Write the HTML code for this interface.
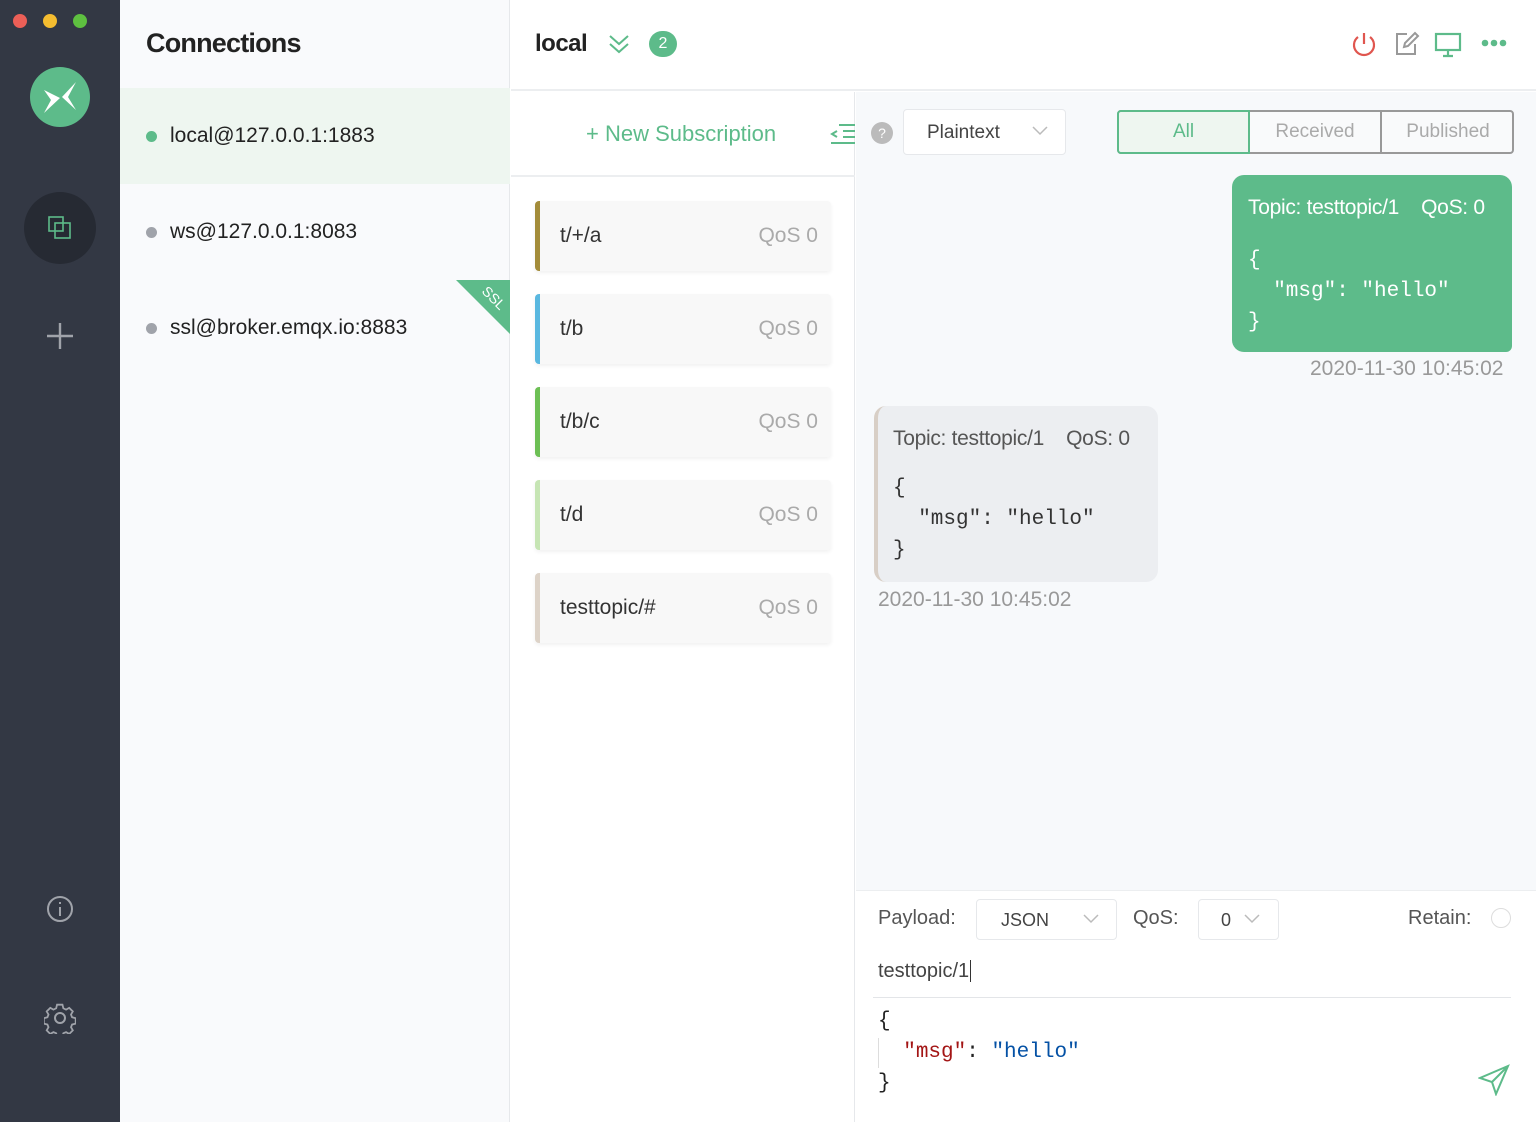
<!DOCTYPE html>
<html><head><meta charset="utf-8"><style>
*{margin:0;padding:0;box-sizing:border-box}
body{width:1536px;height:1122px;overflow:hidden;font-family:"Liberation Sans",sans-serif;background:#fff;position:relative;color:#222}
.abs{position:absolute}
.side{left:0;top:0;width:120px;height:1122px;background:#333844}
.conn{left:120px;top:0;width:390px;height:1122px;background:#f9fafc;border-right:1px solid #e6e8eb}
.dot{width:11px;height:11px;border-radius:50%}
.ci{font-size:21px;color:#222}
.mono{font-family:"Liberation Mono",monospace}
.card{left:535px;width:296px;height:70px;background:#f8f8f8;border-radius:4px;box-shadow:0 2px 4px rgba(0,0,0,.06);border-left:5px solid}
.card .t{position:absolute;left:20px;top:23px;font-size:21px;color:#333}
.card .q{position:absolute;right:13px;top:23px;font-size:21px;color:#aaa}
</style></head><body>
<div class="abs side">
 <div class="abs dot" style="left:13px;top:14px;width:14px;height:14px;background:#ec5f57"></div>
 <div class="abs dot" style="left:43px;top:14px;width:14px;height:14px;background:#f5bd30"></div>
 <div class="abs dot" style="left:73px;top:14px;width:14px;height:14px;background:#5ec040"></div>
 <div class="abs" style="left:30px;top:67px;width:60px;height:60px;border-radius:50%;background:#5dbb8a"></div>
 <svg class="abs" style="left:30px;top:67px" width="60" height="60"><path d="M14 23 L30 31 L14 46 L21 33 Z M46 15 L32 30 L46 43 L38 30 Z" fill="#fff"/></svg>
 <div class="abs" style="left:24px;top:192px;width:72px;height:72px;border-radius:50%;background:#262a33"></div>
 <svg class="abs" style="left:47px;top:215px" width="26" height="26" fill="none" stroke="#5dbb8a" stroke-width="1.6"><rect x="2" y="2" width="14" height="14"/><rect x="8" y="8" width="15" height="15"/></svg>
 <svg class="abs" style="left:46px;top:322px" width="28" height="28" stroke="#a0a3aa" stroke-width="2.4"><path d="M14 1V27M1 14H27"/></svg>
 <svg class="abs" style="left:46px;top:895px" width="28" height="28" fill="none" stroke="#a0a3aa" stroke-width="2"><circle cx="14" cy="14" r="12"/><path d="M14 12V21M14 7V9"/></svg>
 <svg class="abs" style="left:44px;top:1002px" width="32" height="32" fill="none" stroke="#a0a3aa" stroke-width="2"><path d="M13 2h6l1 4 3 1.5 3.5-2 4 4-2 3.5 1.2 3 4 1v6l-4 1-1.2 3 2 3.5-4 4-3.5-2-3 1.2-1 4h-6l-1-4-3-1.2-3.5 2-4-4 2-3.5-1.2-3-4-1v-6l4-1 1.2-3-2-3.5 4-4 3.5 2 3-1.5z" transform="scale(0.9) translate(1.5 1)"/><circle cx="16" cy="16" r="5"/></svg>
</div>
<div class="abs conn">
 <div class="abs" style="left:26px;top:28px;font-size:27px;font-weight:bold;letter-spacing:-0.8px">Connections</div>
 <div class="abs" style="left:0;top:88px;width:390px;height:96px;background:#eef6f0"></div>
 <div class="abs dot" style="left:26px;top:131px;background:#5dbb8a"></div>
 <div class="abs ci" style="left:50px;top:124px">local@127.0.0.1:1883</div>
 <div class="abs dot" style="left:26px;top:227px;background:#a0a3aa"></div>
 <div class="abs ci" style="left:50px;top:220px">ws@127.0.0.1:8083</div>
 <div class="abs dot" style="left:26px;top:323px;background:#a0a3aa"></div>
 <div class="abs ci" style="left:50px;top:316px">ssl@broker.emqx.io:8883</div>
 <svg class="abs" style="left:336px;top:280px" width="54" height="54"><path d="M0 0H54V54Z" fill="#5dbb8a"/><text x="0" y="0" fill="#fff" font-size="14" font-family="Liberation Sans" transform="translate(25 12) rotate(45)">SSL</text></svg>
</div>
<div class="abs" style="left:511px;top:0;width:1025px;height:91px;border-bottom:2px solid #eceef0;background:#fff"></div>
<div class="abs" style="left:535px;top:30px;font-size:24px;font-weight:bold;letter-spacing:-0.5px">local</div>
<svg class="abs" style="left:607px;top:33px" width="24" height="22" fill="none" stroke="#5dbb8a" stroke-width="2"><path d="M3 3L12 11L21 3M3 11L12 19L21 11"/></svg>
<div class="abs" style="left:649px;top:31px;width:28px;height:26px;border-radius:13px;background:#5dbb8a;color:#fff;font-size:16px;text-align:center;line-height:26px">2</div>
<svg class="abs" style="left:1350px;top:30px" width="28" height="28" fill="none" stroke="#e0564f" stroke-width="2.2"><path d="M14 3V14M8 7A10 10 0 1 0 20 7"/></svg>
<svg class="abs" style="left:1394px;top:31px" width="26" height="26" fill="none" stroke="#999" stroke-width="2"><path d="M13 3H3V23H21V13"/><path d="M10 16L11 12L21 2L24 5L14 15Z"/></svg>
<svg class="abs" style="left:1434px;top:31px" width="28" height="28" fill="none" stroke="#5dbb8a" stroke-width="2.2"><rect x="2" y="3" width="24" height="16"/><path d="M14 19V25M9 25H19"/></svg>
<svg class="abs" style="left:1481px;top:38px" width="28" height="10" fill="#5dbb8a"><circle cx="4" cy="5" r="3.3"/><circle cx="13" cy="5" r="3.3"/><circle cx="22" cy="5" r="3.3"/></svg>
<div class="abs" style="left:511px;top:92px;width:344px;height:1030px;background:#fff;border-right:1px solid #e6e8eb"></div>
<div class="abs" style="left:511px;top:175px;width:344px;height:2px;background:#eceef0"></div>
<div class="abs" style="left:586px;top:121px;font-size:22px;color:#5dbb8a">+ New Subscription</div>
<svg class="abs" style="left:829px;top:121px" width="26" height="26" fill="none" stroke="#5dbb8a" stroke-width="2"><path d="M10 4H26M14 10H26M14 16H26M2 22H26M8 10L3 13L8 16"/></svg>
<div class="abs card" style="top:201px;border-color:#a38c3a"><span class="t">t/+/a</span><span class="q">QoS 0</span></div>
<div class="abs card" style="top:294px;border-color:#5ab8e0"><span class="t">t/b</span><span class="q">QoS 0</span></div>
<div class="abs card" style="top:387px;border-color:#6cbf54"><span class="t">t/b/c</span><span class="q">QoS 0</span></div>
<div class="abs card" style="top:480px;border-color:#c6e5b4"><span class="t">t/d</span><span class="q">QoS 0</span></div>
<div class="abs card" style="top:573px;border-color:#ddd3c8"><span class="t">testtopic/#</span><span class="q">QoS 0</span></div>
<div class="abs" style="left:856px;top:92px;width:680px;height:798px;background:#f7f9fb"></div>
<div class="abs" style="left:871px;top:122px;width:22px;height:22px;border-radius:50%;background:#bbb;color:#fff;font-size:14px;text-align:center;line-height:22px">?</div>
<div class="abs" style="left:903px;top:109px;width:163px;height:46px;background:#fff;border:1px solid #e6e8eb;border-radius:4px;font-size:19px;color:#444;padding:12px 0 0 23px">Plaintext</div>
<svg class="abs" style="left:1032px;top:126px" width="16" height="10" fill="none" stroke="#bbb" stroke-width="1.5"><path d="M1 1L8 8L15 1"/></svg>
<div class="abs" style="left:1117px;top:110px;width:397px;height:44px;border:2px solid #999;border-radius:4px;background:#f9fafb"></div>
<div class="abs" style="left:1117px;top:110px;width:133px;height:44px;border:2px solid #5dbb8a;border-radius:4px 0 0 4px;background:#eef6f0;color:#5dbb8a;font-size:19px;text-align:center;line-height:40px">All</div>
<div class="abs" style="left:1250px;top:110px;width:132px;height:44px;border-right:2px solid #999;color:#aaa;font-size:19px;text-align:center;line-height:44px">Received</div>
<div class="abs" style="left:1382px;top:110px;width:132px;height:44px;color:#aaa;font-size:19px;text-align:center;line-height:44px">Published</div>
<div class="abs" style="left:1232px;top:175px;width:280px;height:177px;background:#5dbb8a;border-radius:12px 12px 6px 12px;color:#fff">
 <div class="abs" style="left:16px;top:21px;font-size:21px;white-space:nowrap;letter-spacing:-0.3px">Topic: testtopic/1 &nbsp;&nbsp;&nbsp;QoS: 0</div>
 <div class="abs mono" style="left:16px;top:70px;font-size:21px;line-height:31px;white-space:pre">{
  "msg": "hello"
}</div>
</div>
<div class="abs" style="left:1310px;top:357px;font-size:21px;color:#999">2020-11-30 10:45:02</div>
<div class="abs" style="left:874px;top:406px;width:284px;height:176px;background:#eceef1;border-radius:12px;border-left:4px solid #d8cfc6;color:#555">
 <div class="abs" style="left:15px;top:21px;font-size:21px;white-space:nowrap;letter-spacing:-0.3px">Topic: testtopic/1 &nbsp;&nbsp;&nbsp;QoS: 0</div>
 <div class="abs mono" style="left:15px;top:67px;font-size:21px;line-height:31px;white-space:pre;color:#333">{
  "msg": "hello"
}</div>
</div>
<div class="abs" style="left:878px;top:588px;font-size:21px;color:#999">2020-11-30 10:45:02</div>
<div class="abs" style="left:856px;top:890px;width:680px;height:232px;background:#fff;border-top:1px solid #eceef0"></div>
<div class="abs" style="left:878px;top:907px;font-size:20px;color:#555">Payload:</div>
<div class="abs" style="left:976px;top:899px;width:141px;height:41px;border:1px solid #e6e8eb;border-radius:4px;font-size:18px;color:#444;padding:10px 0 0 24px">JSON</div>
<svg class="abs" style="left:1083px;top:914px" width="16" height="10" fill="none" stroke="#bbb" stroke-width="1.5"><path d="M1 1L8 8L15 1"/></svg>
<div class="abs" style="left:1133px;top:907px;font-size:20px;color:#555">QoS:</div>
<div class="abs" style="left:1198px;top:899px;width:81px;height:41px;border:1px solid #e6e8eb;border-radius:4px;font-size:18px;color:#444;padding:10px 0 0 22px">0</div>
<svg class="abs" style="left:1244px;top:914px" width="16" height="10" fill="none" stroke="#bbb" stroke-width="1.5"><path d="M1 1L8 8L15 1"/></svg>
<div class="abs" style="left:1408px;top:907px;font-size:20px;color:#555">Retain:</div>
<div class="abs" style="left:1491px;top:908px;width:20px;height:20px;border-radius:50%;border:1px solid #ddd"></div>
<div class="abs" style="left:878px;top:960px;font-size:20px;color:#444">testtopic/1<span style="border-left:1px solid #333;margin-left:1px"></span></div>
<div class="abs" style="left:873px;top:997px;width:638px;height:1px;background:#e3e5e8"></div>
<div class="abs mono" style="left:878px;top:1006px;font-size:21px;line-height:31px;white-space:pre;color:#222">{
  <span style="color:#a31515">"msg"</span>: <span style="color:#0451a5">"hello"</span>
}</div>
<div class="abs" style="left:878px;top:1038px;width:1px;height:30px;background:#ddd"></div>
<svg class="abs" style="left:1478px;top:1064px" width="32" height="32" fill="none" stroke="#5dbb8a" stroke-width="2"><path d="M30 2L2 14L14 18L18 30Z M30 2L14 18"/></svg>
</body></html>
